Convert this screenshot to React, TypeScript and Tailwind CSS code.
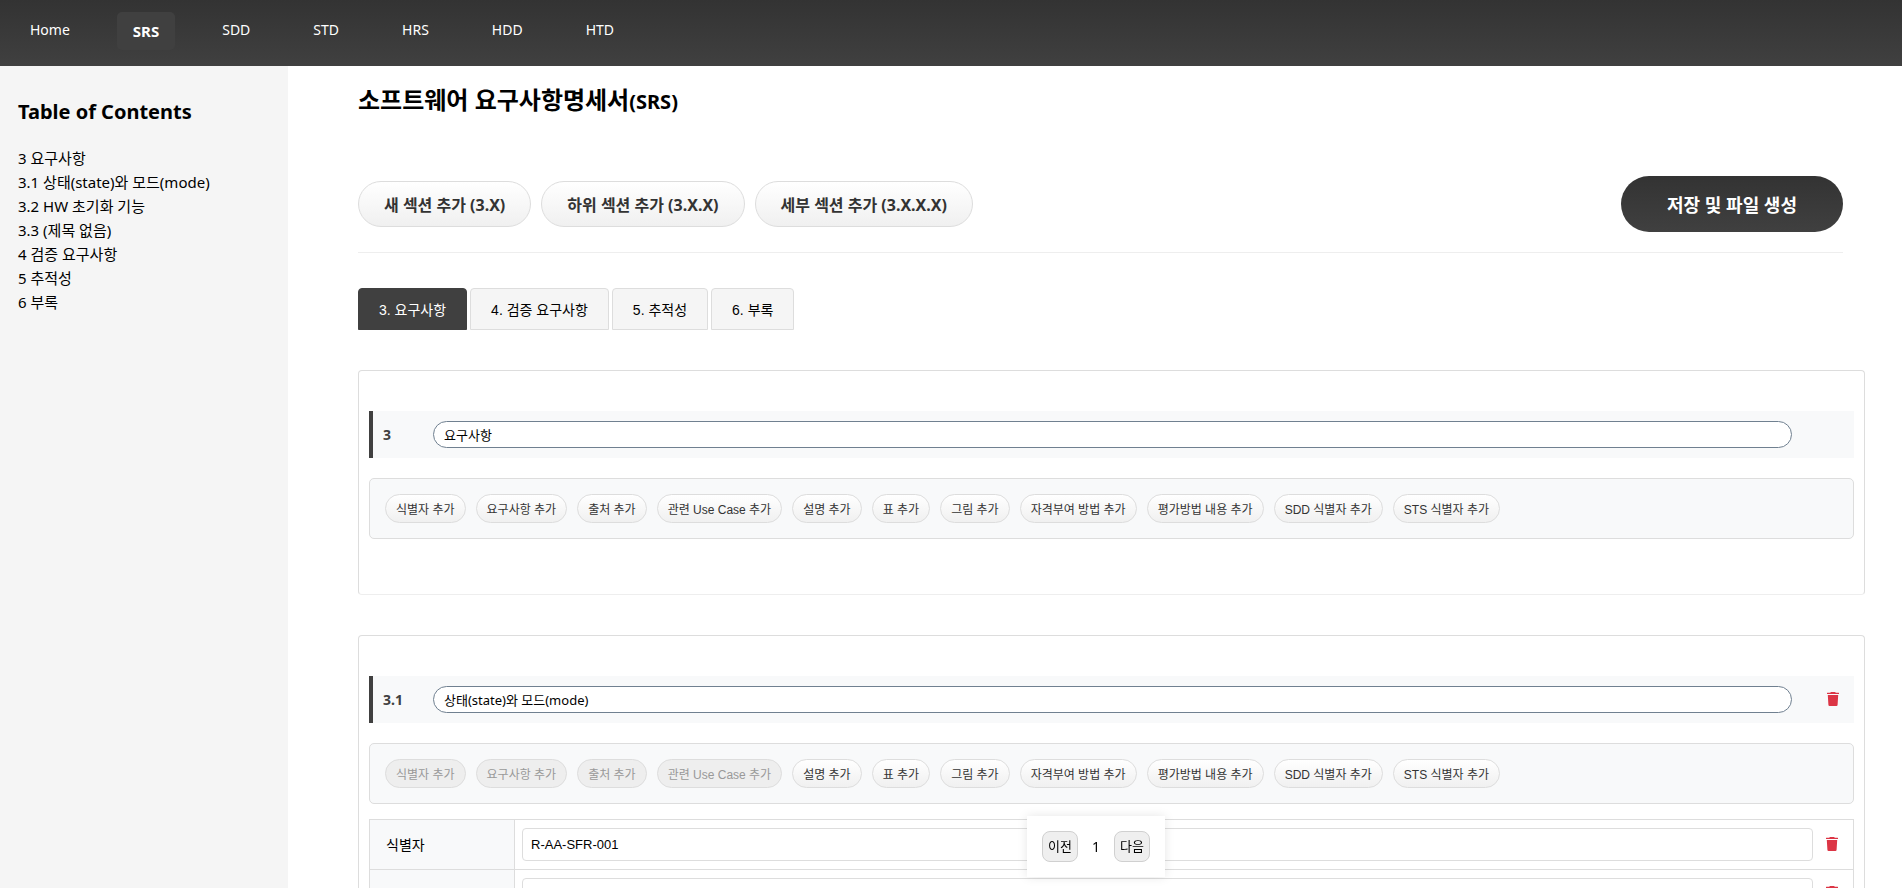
import { FC, useState } from 'react';
import clsx from 'clsx';

const NAV = ['Home', 'SRS', 'SDD', 'STD', 'HRS', 'HDD', 'HTD'];

const TOC = [
  '3 요구사항',
  '3.1 상태(state)와 모드(mode)',
  '3.2 HW 초기화 기능',
  '3.3 (제목 없음)',
  '4 검증 요구사항',
  '5 추적성',
  '6 부록',
];

const SECTION_ACTIONS = ['새 섹션 추가 (3.X)', '하위 섹션 추가 (3.X.X)', '세부 섹션 추가 (3.X.X.X)'];

const TABS = ['3. 요구사항', '4. 검증 요구사항', '5. 추적성', '6. 부록'];

const ROW_ACTIONS = [
  '식별자 추가',
  '요구사항 추가',
  '출처 추가',
  '관련 Use Case 추가',
  '설명 추가',
  '표 추가',
  '그림 추가',
  '자격부여 방법 추가',
  '평가방법 내용 추가',
  'SDD 식별자 추가',
  'STS 식별자 추가',
];

const FONT_UI = "font-['Noto_Sans','Noto_Sans_CJK_KR',sans-serif]";
const FONT_FORM = "font-['Liberation_Sans','Noto_Sans_CJK_KR',sans-serif]";

interface Row {
  label: string;
  value: string;
  multiline?: boolean;
}

interface SectionProps {
  number: string;
  title: string;
  disabled?: string[];
  removable?: boolean;
  rows?: Row[];
}

const ButtonTrash: FC<{ label: string }> = ({ label }) => (
  <button type="button" aria-label={label} className="block pb-0.5 text-[#dc3545]">
    <svg viewBox="0 0 12 14" className="block h-3.5 w-3" fill="currentColor" aria-hidden="true">
      <path d="M3.8 0h4.4l.5.8h3a.3.3 0 0 1 .3.3v1H0v-1a.3.3 0 0 1 .3-.3h3z" />
      <path d="M.8 3h10.4l-.6 9.8a1.2 1.2 0 0 1-1.2 1.2H2.6a1.2 1.2 0 0 1-1.2-1.2z" />
    </svg>
  </button>
);

const Section: FC<SectionProps> = ({ number, title, disabled = [], removable, rows = [] }) => (
  <section className="mb-10 rounded border border-[#ddd] border-b-[#eee] px-2.5 pt-10 pb-[55px]">
    <div className="flex items-center border-l-4 border-[#404040] bg-[#f8f9fa] py-2.5 pl-2.5">
      <label
        htmlFor={`title-${number}`}
        className="w-[50px] shrink-0 text-sm leading-5 font-bold text-[#404040]"
      >
        {number}
      </label>
      <input
        id={`title-${number}`}
        defaultValue={title}
        className="h-[27px] min-w-0 flex-1 rounded-full border border-[#708090] bg-white px-2.5 text-[13px]"
      />
      <div className="flex w-[62px] shrink-0 justify-end pr-[15px]">
        {removable && <ButtonTrash label={`${number} 삭제`} />}
      </div>
    </div>
    <div
      className={clsx(
        'mt-5 flex flex-wrap gap-2.5 rounded-[5px] border border-[#ddd] bg-[#f8f9fa] p-[15px]',
        FONT_FORM
      )}
    >
      {ROW_ACTIONS.map((a) => (
        <button
          key={a}
          type="button"
          disabled={disabled.includes(a)}
          className={clsx(
            'h-[29px] rounded-full border border-[#ddd] px-2.5 pt-0.5 text-xs text-[#333]',
            'bg-linear-to-b from-white to-[#f0f0f0]',
            'disabled:bg-[#eee] disabled:bg-none disabled:text-[#999]'
          )}
        >
          {a}
        </button>
      ))}
    </div>
    {rows.length > 0 && (
      <table className={clsx('mt-[15px] w-full border-collapse', FONT_FORM)}>
        <tbody>
          {rows.map((r) => (
            <tr key={r.label}>
              <th
                scope="row"
                className="w-[145px] border border-[#ddd] bg-[#f8f9fa] px-4 text-left text-sm font-normal"
              >
                <label htmlFor={`${number}-${r.label}`}>{r.label}</label>
              </th>
              <td className="border border-[#ddd] py-2 pr-[15px] pl-[7px]">
                <div className={clsx('flex gap-[13px]', r.multiline ? 'items-start' : 'items-center')}>
                  {r.multiline ? (
                    <textarea
                      id={`${number}-${r.label}`}
                      defaultValue={r.value}
                      className="h-[200px] min-w-0 flex-1 rounded border border-[#ddd] bg-white p-2 text-[13px]"
                    />
                  ) : (
                    <input
                      id={`${number}-${r.label}`}
                      defaultValue={r.value}
                      className="h-[33px] min-w-0 flex-1 rounded border border-[#ddd] bg-white px-2 text-[13px]"
                    />
                  )}
                  <div className={clsx(r.multiline && 'pt-2')}>
                    <ButtonTrash label={`${r.label} 삭제`} />
                  </div>
                </div>
              </td>
            </tr>
          ))}
        </tbody>
      </table>
    )}
  </section>
);

const App: FC = () => {
  const [tab, setTab] = useState(TABS[0]);

  return (
    <div className={clsx('flex h-screen flex-col bg-white text-black', FONT_UI)}>
      <header className="h-[66px] shrink-0 bg-linear-to-b from-[#333] to-[#404040] px-3.5 pt-3">
        <nav className="flex items-start gap-[31px]">
          {NAV.map((n) => (
            <a
              key={n}
              href={`#${n.toLowerCase()}`}
              className={clsx(
                'rounded-[5px] px-4 text-white',
                n === 'SRS' ? 'bg-[#404040] text-[15px] leading-[38px] font-bold' : 'text-sm leading-9'
              )}
            >
              {n}
            </a>
          ))}
        </nav>
      </header>
      <div className="flex min-h-0 flex-1">
        <aside className="w-72 shrink-0 bg-[#f5f5f5] px-[18px] pt-[30px]">
          <h2 className="text-xl leading-8 font-bold">Table of Contents</h2>
          <ul className="mt-[18px] text-[15px] leading-6">
            {TOC.map((t) => (
              <li key={t}>
                <a href={`#${t.split(' ')[0]}`}>{t}</a>
              </li>
            ))}
          </ul>
        </aside>
        <main className="min-w-0 flex-1 overflow-y-auto pr-[37px] pl-[70px] [scrollbar-width:none]">
          <h1 className="mt-4 text-2xl leading-9 font-bold">
            소프트웨어 요구사항명세서<span className="text-xl">(SRS)</span>
          </h1>
          <div className="mt-[58px] mr-[22px] flex items-center justify-between border-b border-[#eee] pb-5">
            <div className="flex gap-2.5">
              {SECTION_ACTIONS.map((a) => (
                <button
                  key={a}
                  type="button"
                  className="h-[46px] rounded-full border border-[#ddd] bg-linear-to-b from-white to-[#f0f0f0] px-[25px] pt-0.5 font-bold text-[#333]"
                >
                  {a}
                </button>
              ))}
            </div>
            <button
              type="button"
              className="h-14 rounded-full bg-linear-to-b from-[#333] to-[#404040] px-[46px] pt-0.5 text-lg font-bold text-white"
            >
              저장 및 파일 생성
            </button>
          </div>
          <div className={clsx('mt-[35px] mb-10 flex gap-[3px]', FONT_FORM)} role="tablist">
            {TABS.map((t) => (
              <button
                key={t}
                type="button"
                role="tab"
                aria-selected={t === tab}
                onClick={() => setTab(t)}
                className={clsx(
                  'h-[42px] rounded-t border px-5 pt-0.5 text-sm',
                  t === tab
                    ? 'border-[#404040] bg-[#404040] text-white'
                    : 'border-[#ddd] bg-[#f5f5f5] text-black'
                )}
              >
                {t}
              </button>
            ))}
          </div>
          <Section number="3" title="요구사항" />
          <Section
            number="3.1"
            title="상태(state)와 모드(mode)"
            disabled={ROW_ACTIONS.slice(0, 4)}
            removable
            rows={[
              { label: '식별자', value: 'R-AA-SFR-001' },
              { label: '요구사항', value: '', multiline: true },
            ]}
          />
        </main>
      </div>
      <div className="fixed bottom-[11px] left-1/2 flex h-[61px] w-[138px] translate-x-[76px] items-center justify-between bg-white px-[15px] text-sm shadow-[0_0_10px_rgba(0,0,0,0.1)]">
        <button
          type="button"
          className="h-[31px] rounded-lg border border-[#d0d0d0] bg-[#efefef] px-[5px] text-[13px]"
        >
          이전
        </button>
        <span>1</span>
        <button
          type="button"
          className="h-[31px] rounded-lg border border-[#d0d0d0] bg-[#efefef] px-[5px] text-[13px]"
        >
          다음
        </button>
      </div>
    </div>
  );
};

export default App;
